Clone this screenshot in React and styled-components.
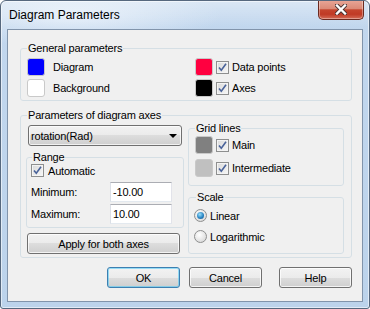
import React from 'react'
import styled, { createGlobalStyle } from 'styled-components'

const GlobalStyle = createGlobalStyle`
  html, body {
    margin: 0;
    padding: 0;
    background: #fff;
  }
  body {
    font-family: "Liberation Sans", Arial, sans-serif;
    font-size: 11px;
    letter-spacing: -0.2px;
    color: #000;
  }
  * {
    box-sizing: border-box;
  }
`

const Window = styled.div`
  width: 370px;
  height: 309px;
  border: 1px solid #56687e;
  border-radius: 6px 6px 3px 3px;
  background:
    linear-gradient(180deg, rgba(255,255,255,0.4) 0px, rgba(255,255,255,0) 26px),
    radial-gradient(ellipse 150px 32px at 70px 14px, rgba(230,239,249,0.95), rgba(230,239,249,0)),
    linear-gradient(180deg, #c2d7ee 0%, #bcd3eb 100%);
  box-shadow: inset 0 0 0 1px rgba(255,255,255,0.55);
  display: flex;
  flex-direction: column;
  padding: 0 6px 6px;
  overflow: hidden;
`

const TitleBar = styled.div`
  height: 28px;
  display: flex;
  align-items: center;
  padding-left: 2px;
`

const Title = styled.div`
  font-family: "Segoe UI", "Liberation Sans", Arial, sans-serif;
  font-size: 12px;
  letter-spacing: 0;
  color: #000;
`

const CloseButton = styled.div`
  margin-left: auto;
  margin-right: -1px;
  align-self: flex-start;
  margin-top: -1px;
  width: 46px;
  height: 20px;
  border: 1px solid #6b2a20;
  border-top: none;
  border-radius: 0 0 5px 5px;
  background: linear-gradient(180deg, #e9a798 0%, #db8a77 45%, #c5452e 52%, #c03a25 75%, #d46c57 100%);
  box-shadow: inset 0 0 0 1px rgba(255,255,255,0.35);
  display: flex;
  align-items: center;
  justify-content: center;
`

const Client = styled.div`
  flex: 1;
  border: 1px solid #8194ab;
  background: #f0f0f0;
  padding: 11px 10px 12px 12px;
  display: flex;
  flex-direction: column;
`

const Group = styled.fieldset`
  margin: ${p => p.$margin || '0'};
  padding: ${p => p.$pad || '0'};
  border: 1px solid #d5dfe5;
  border-radius: 3px;
  min-width: 0;
`

const Legend = styled.legend`
  padding: 0 1px;
  margin-left: ${p => p.$offset || 0}px;
  line-height: ${p => p.$lh || 15}px;
`

const ColorGrid = styled.div`
  display: grid;
  grid-template-columns: 168px 1fr;
  row-gap: 3px;
`

const Row = styled.div`
  display: flex;
  align-items: center;
  height: ${p => p.$h || 18}px;
  gap: ${p => p.$gap || 3}px;
  margin-top: ${p => p.$mt || 0}px;
`

const Swatch = styled.span`
  width: 18px;
  height: 18px;
  flex: none;
  border: 1px solid #c9c9c9;
  border-radius: 3px;
  background: ${p => p.$color};
`

const CheckBox = styled.span`
  width: 13px;
  height: 13px;
  flex: none;
  border: 1px solid #8e8f8f;
  background: linear-gradient(135deg, #dadada 0%, #f7f7f7 100%);
  box-shadow: inset 0 0 0 1px #f4f4f4;
  display: inline-flex;
  align-items: center;
  justify-content: center;
`

const RadioDot = styled.span`
  width: 13px;
  height: 13px;
  flex: none;
  border-radius: 50%;
  border: 1px solid #8e8f8f;
  background: radial-gradient(circle at 40% 35%, #ffffff 0%, #e6e6e6 55%, #cfcfcf 100%);
  display: inline-flex;
  align-items: center;
  justify-content: center;
  &::after {
    content: '';
    display: ${p => (p.$on ? 'block' : 'none')};
    width: 7px;
    height: 7px;
    border-radius: 50%;
    background: radial-gradient(circle at 40% 35%, #9be0fc 0%, #2b86c4 55%, #0f4d83 100%);
  }
`

const Columns = styled.div`
  display: flex;
  gap: 4px;
`

const LeftCol = styled.div`
  width: 158px;
  display: flex;
  flex-direction: column;
`

const RightCol = styled.div`
  width: 156px;
  margin-top: -1px;
  display: flex;
  flex-direction: column;
`

const Combo = styled.div`
  height: 21px;
  margin: 3px 2px 0;
  border: 1px solid #707070;
  border-radius: 3px;
  background: linear-gradient(180deg, #f2f2f2 0%, #ebebeb 50%, #dddddd 50%, #cfcfcf 100%);
  box-shadow: inset 0 0 0 1px rgba(255,255,255,0.7);
  display: flex;
  align-items: center;
  justify-content: space-between;
  padding: 0 4px 0 2px;
`

const Arrow = styled.span`
  width: 0;
  height: 0;
  border-left: 4px solid transparent;
  border-right: 4px solid transparent;
  border-top: 4px solid #000;
`

const FieldRow = styled.div`
  display: flex;
  align-items: center;
  height: 20px;
  margin-top: ${p => p.$mt || 0}px;
`

const FieldLabel = styled.span`
  width: 79px;
`

const Field = styled.div`
  width: 62px;
  height: 20px;
  background: #fff;
  border: 1px solid;
  border-color: #abadb3 #e2e3ea #e3e9ef #dbdfe6;
  padding-left: 2px;
  display: flex;
  align-items: center;
`

const Button = styled.div`
  width: ${p => p.$w || 73}px;
  height: 21px;
  margin: ${p => p.$margin || '0'};
  border: 1px solid ${p => (p.$default ? '#3c7fb1' : '#707070')};
  border-radius: 3px;
  background: linear-gradient(180deg, #f2f2f2 0%, #ebebeb 50%, #dddddd 50%, #cfcfcf 100%);
  box-shadow: inset 0 0 0 1px ${p => (p.$default ? 'rgba(72,200,248,0.55)' : 'rgba(255,255,255,0.75)')};
  display: flex;
  align-items: center;
  justify-content: center;
`

const ButtonBar = styled.div`
  display: flex;
  justify-content: flex-end;
  margin-top: 9px;
`

const Check = () => (
  <CheckBox>
    <svg width="11" height="11" viewBox="0 0 11 11">
      <path d="M2 5.5 L4.3 8.3 L9 1.8" fill="none" stroke="#4a639a" strokeWidth="1.6" />
    </svg>
  </CheckBox>
)

export default function App() {
  return (
    <>
      <GlobalStyle />
      <Window>
        <TitleBar>
          <Title>Diagram Parameters</Title>
          <CloseButton>
            <svg width="12" height="11" viewBox="0 0 12 11">
              <path d="M2 1.5 L10 9.5 M10 1.5 L2 9.5" stroke="#4a3434" strokeWidth="4.2" strokeLinecap="square" />
              <path d="M2 1.5 L10 9.5 M10 1.5 L2 9.5" stroke="#ffffff" strokeWidth="2.4" strokeLinecap="square" />
            </svg>
          </CloseButton>
        </TitleBar>
        <Client>
          <Group $pad="2px 6px 3px">
            <Legend>General parameters</Legend>
            <ColorGrid>
              <Row $gap={8}>
                <Swatch $color="#0000ff" />
                <span>Diagram</span>
              </Row>
              <Row>
                <Swatch $color="#ff0040" />
                <Check />
                <span>Data points</span>
              </Row>
              <Row $gap={8}>
                <Swatch $color="#ffffff" />
                <span>Background</span>
              </Row>
              <Row>
                <Swatch $color="#000000" />
                <Check />
                <span>Axes</span>
              </Row>
            </ColorGrid>
          </Group>

          <Group $margin="8px 0 0" $pad="0 7px 3px 5px">
            <Legend $lh={13} $offset={1}>Parameters of diagram axes</Legend>
            <Columns>
              <LeftCol>
                <Combo>
                  <span>rotation(Rad)</span>
                  <Arrow />
                </Combo>
                <Group $margin="5px 0 0" $pad="0 4px 3px">
                  <Legend $lh={13} $offset={1}>Range</Legend>
                  <Row $h={13} $gap={4}>
                    <Check />
                    <span>Automatic</span>
                  </Row>
                  <FieldRow $mt={5}>
                    <FieldLabel>Minimum:</FieldLabel>
                    <Field>-10.00</Field>
                  </FieldRow>
                  <FieldRow $mt={2}>
                    <FieldLabel>Maximum:</FieldLabel>
                    <Field>10.00</Field>
                  </FieldRow>
                </Group>
                <Button $w={153} $margin="5px 0 0 1px">Apply for both axes</Button>
              </LeftCol>
              <RightCol>
                <Group $pad="0 6px 8px">
                  <Legend>Grid lines</Legend>
                  <Row>
                    <Swatch $color="#808080" />
                    <Check />
                    <span>Main</span>
                  </Row>
                  <Row $mt={5}>
                    <Swatch $color="#c0c0c0" />
                    <Check />
                    <span>Intermediate</span>
                  </Row>
                </Group>
                <Group $margin="4px 0 0" $pad="3px 5px 9px">
                  <Legend $offset={2}>Scale</Legend>
                  <Row $h={15}>
                    <RadioDot $on />
                    <span>Linear</span>
                  </Row>
                  <Row $h={15} $mt={6}>
                    <RadioDot />
                    <span>Logarithmic</span>
                  </Row>
                </Group>
              </RightCol>
            </Columns>
          </Group>

          <ButtonBar>
            <Button $default>OK</Button>
            <Button $margin="0 0 0 9px">Cancel</Button>
            <Button $margin="0 0 0 17px">Help</Button>
          </ButtonBar>
        </Client>
      </Window>
    </>
  )
}
